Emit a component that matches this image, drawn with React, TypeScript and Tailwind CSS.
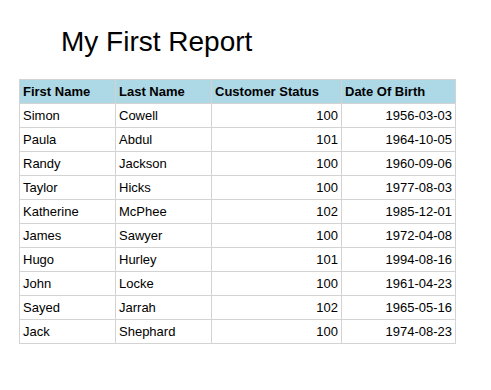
const rows: [string, string, number, string][] = [
  ['Simon', 'Cowell', 100, '1956-03-03'],
  ['Paula', 'Abdul', 101, '1964-10-05'],
  ['Randy', 'Jackson', 100, '1960-09-06'],
  ['Taylor', 'Hicks', 100, '1977-08-03'],
  ['Katherine', 'McPhee', 102, '1985-12-01'],
  ['James', 'Sawyer', 100, '1972-04-08'],
  ['Hugo', 'Hurley', 101, '1994-08-16'],
  ['John', 'Locke', 100, '1961-04-23'],
  ['Sayed', 'Jarrah', 102, '1965-05-16'],
  ['Jack', 'Shephard', 100, '1974-08-23'],
]

export default function App() {
  return (
    <div className="w-[491px] h-[390px] bg-white text-black font-['Liberation_Sans',Arial,sans-serif]">
      <h1 className="pt-[26px] pl-[61px] text-[28px] leading-[32px] font-normal">My First Report</h1>
      <table className="mt-[21px] ml-[19px] w-[436px] table-fixed border-collapse text-[13px] leading-[15px]">
        <colgroup>
          <col className="w-[96px]" />
          <col className="w-[96px]" />
          <col className="w-[130px]" />
          <col className="w-[114px]" />
        </colgroup>
        <thead>
          <tr className="bg-[#add8e6]">
            <th className="h-[24px] border border-[#d3d3d3] px-[3px] text-left font-bold">First Name</th>
            <th className="h-[24px] border border-[#d3d3d3] px-[3px] text-left font-bold">Last Name</th>
            <th className="h-[24px] border border-[#d3d3d3] px-[3px] text-left font-bold">Customer Status</th>
            <th className="h-[24px] border border-[#d3d3d3] px-[3px] text-left font-bold">Date Of Birth</th>
          </tr>
        </thead>
        <tbody>
          {rows.map(([first, last, status, dob]) => (
            <tr key={first}>
              <td className="h-[24px] border border-[#d3d3d3] px-[3px]">{first}</td>
              <td className="h-[24px] border border-[#d3d3d3] px-[3px]">{last}</td>
              <td className="h-[24px] border border-[#d3d3d3] px-[3px] text-right">{status}</td>
              <td className="h-[24px] border border-[#d3d3d3] px-[3px] text-right">{dob}</td>
            </tr>
          ))}
        </tbody>
      </table>
    </div>
  )
}
